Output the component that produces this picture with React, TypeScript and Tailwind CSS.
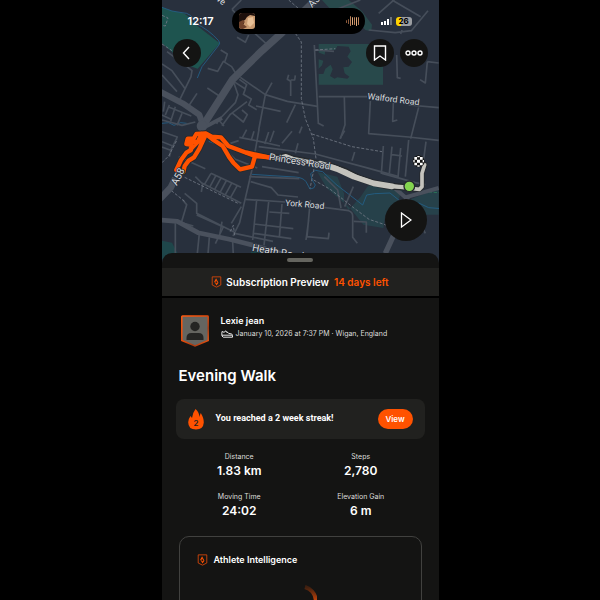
import React from 'react';

const minorRoads = [
  'M0 192l30 20 40 55M15 155l60 45 15 12-3 18-35 72M0 225l45 50',
  'M137 205l30 9 17-30 25 16 15 25M176 150l20 12-8 24',
  'M136 264l36 24M105 280l-25 38M225 112l25 15 10-22M273 95l42 38',
  'M210 28l18 20M210 28l28-28',
  'M235 232l75 52 66 20 90 15M330 248l-20 36-20 106',
  'M216 245l34 22-6 16 24 14-8 18 24 14M232 238l22 16-6 14',
  'M216 250l12 34-8 24-50 52-6 12M255 305l-50 38-25 34M212 340l32 26 12-22-16-14M170 360l16 18',
  'M282 318l74 16M400 314l-26 54M386 288l0-44-10-6 4-14M386 240l12 0 2-14',
  'M457 135l12 235 16 8M460 150l56 4M470 290l145 0M547 292l2 82-14 42M625 303l-5 98 120 10 90 10M770 322l-24 94M694 308l-2 56 14-4M740 315l90 8',
  'M704 165l2 68 10 2M796 185l-6 64-16-10M796 185l34 4',
  'M0 345l30 14M0 360l60 16 40-10M8 305l-4 30M22 315l-12 30M40 320l-14 44M60 340l-15 36M18 320l70 28',
  'M0 395l46 16-20 40-26-10M30 440l-8 30M0 425l34 14M50 470l80 36',
  'M291 388l-22 125-36 155-20 40M232 412l60 12 62 14M240 415l14-26M320 396l-12 36M336 392l-12 34M268 420l8-26M205 430l25-8',
  'M290 440l170 22 150 40 100 28M360 430l30-36M400 460l8-30M570 482l8-26M180 440l40 38 66 26M262 530l150 6M300 500l110 18',
  'M147 520l90 42M118 548l120 62M147 520l-20 34M162 526l-18 34M178 532l-20 36M194 540l-20 38M210 548l-20 36M226 556l-20 36M100 530l22 22-4 24',
  'M266 545l62 18 20 22 60 6M250 598l120 8M485 622l75 10q12 4 12 16l0 64 14 18M284 600l-12 120M320 606l-14 130M360 612l-8 100M276 672l118 14M276 700l112 16M322 636l60 4',
  'M68 580l36 30 0 30 112 56M62 600l12 14-16 54 36 10M218 700l115 24M104 645l80 36-24 50M238 620l-30 50',
  'M40 670l0 90M112 700l-6 60M142 712l-4 50M212 725l2 40M180 665l-6 36',
  'M487 530l40 40 10 54M445 600l-10 110 64 6 2-18M440 660l-8 60M575 664l38 2 0 32M499 716l2-16M548 620l26-60',
  'M690 440l-8 80M716 444l-8 88M664 438l-6 84M740 420l-10 110M792 425l-12 90M690 464l30 4M660 520l100 28 30 6M760 640l30 60',
  'M595 0l-70 28 40 12M620 90l80 8 48-6 50-60M690 0l86 50M650 40l48-42M720 90l-4 12M470 0l-10 14',
  'M420 380l-8 20M534 416l14-24',
];

const knownRoute = 'M326 472l24 2 22-6 20 8 60 12 60 12 38 14 40 20 40 13 40 10 52 4';

function StreetMap() {
  return (
    <svg
      viewBox="0 0 831 798"
      preserveAspectRatio="xMidYMin slice"
      className="absolute inset-0 h-full w-full"
      fill="none"
      strokeLinejoin="round"
      aria-label="Route map"
    >
      <path fill="#28303d" d="M-600 0h2000v900H-600z" />
      <path fill="#1e544f" d="M0 22q30 14 60 16 20 6 34 30l79 62-66 76-30-10-77-66z" />
      <path fill="#28494b" d="M480 0h80l40 34 30 40-2 20-18-4-50-58-56-6zM470 132h193v122H470z" />
      <path
        fill="#28303d"
        d="M490 150l30 0 6-12 34 2 6 14-10 16 14 16-10 14-16 2 4 18 14 10-6 6-30-4-8 4-14-8 8-20-6-14-16 12-6 16-16 0-4-10 16-16 4-14-14-4-10-10 6-12 22 8z"
      />
      <path fill="#26414a" d="M466 516l60 14 20 50 0 30 14 20 36-40 20-30 20-14 40 12 48 8-20 44-34 34-6 40-60-10-40-50-70-60z" />
      <path fill="#26414a" d="M740 600l90-36v80l-90 0z" />
      <path fill="#1e464a" d="M0 722l30 6 16 30 0 20H0zM270 752l50 0 10 16h-70z" />
      <g stroke="#23628a" strokeWidth="2.500">
        <path d="M0 22q30 14 60 16 30 0 40 32 40 18 70 52 6 8 0 14l-50 64-14 34M0 370l20-2 16 8 20-8 18 2M140 424l60 22" />
        <path d="M270 523l60 4 70 4q24 2 32 14l12 22q14 0 16-12l-10-16-4-18 14-10 22 4 40 38 80 62 12-30 24-4 46-2 30 24 10 8 46-2 30 14 51 4" />
      </g>
      <path stroke="#2b7358" strokeWidth="3" strokeDasharray="10 5" d="M770 574l61 4" />
      <g stroke="#464e5a" strokeWidth="5">
        {minorRoads.map((d) => (
          <path key={d} d={d} />
        ))}
      </g>
      <g stroke="#727a85" strokeWidth="2.500" strokeDasharray="9 5">
        <path d="M0 46l18 8-8 24-10-2M0 132l30 20M400 100l18 26 0 170 12 60 24 60 8 60-18 90M450 402l120 38 90 15M68 532l164 80M28 572l40 32M0 488l20-20 26-50M218 706l-4-30-10 20M455 540l50 28 76 60 40 30 60 20M380 0l30 26M460 150l60-4" />
      </g>
      <g stroke="#4a515d">
        <path strokeWidth="22" d="M460 0l-100 98-60 54-88 86-50 78-45 70" />
        <path strokeWidth="18" d="M-4 276l66 34 50 34 14 40" />
        <path strokeWidth="20" d="M40 535l-14 28-40 42" />
        <path strokeWidth="14" d="M-4 660l50 4 62 34 94 20 80 20 100 30" />
        <path strokeWidth="16" d="M736 590l-20 70-46 100" />
        <path strokeWidth="12" d="M700 566l30 26 100-28M130 380l50-26" />
      </g>
      <circle cx="120" cy="378" r="16" fill="#4a515d" />
      <g strokeLinecap="round">
        <path stroke="#25292d" strokeWidth="21" d={knownRoute} />
        <path stroke="#25292d" strokeWidth="16" d="M696 559l76 9 8-8 0-40 8-26" />
        <path stroke="#c4c3bd" strokeWidth="12" d={knownRoute} />
        <path stroke="#c4c3bd" strokeWidth="17" d="M475 491l50 16 50 23 60 20 55 9" />
        <path stroke="#c4c3bd" strokeWidth="11" d="M696 559l76 9 8-8 0-40 8-26" />
        {[
          { color: '#25292d', width: 18 },
          { color: '#ff5200', width: 13 },
        ].map(({ color, width }) => (
          <g key={color} stroke={color} strokeWidth={width}>
            <path d="M43 510l14-30 16-22 14-8 0-16-14-2 4-16 18 0 8-14 28-2 18 10 28 2 22 26 80 30 44 4" />
            <path d="M64 516l4-18 12-16 16-10 16-26 20-44 20 16 30 20 20 34 12 16 20 20 36-8 8-28M255 458l65 14M87 446l20-20 12-24M76 424l24 2" />
          </g>
        ))}
      </g>
      <circle cx="742" cy="559" r="16" fill="#83d44f" stroke="#25292d" strokeWidth="4" />
      <circle cx="770" cy="484" r="18" fill="#151515" />
      <path
        fill="#fff"
        d="M765 479h9v9h-9zM757 471h8v8h-8zM774 471h8v8h-8zM757 488h8v8h-8zM774 488h8v8h-8zM766 468h7v4h-7zM766 496h7v4h-7zM754 480h4v7h-4zM782 480h4v7h-4z"
      />
      <g
        fill="#d9dbdd"
        stroke="#28303d"
        strokeWidth="5"
        paintOrder="stroke"
        fontFamily="Roboto, 'Liberation Sans', sans-serif"
        fontSize="26"
      >
        <text transform="translate(616 297) rotate(7)">Walford Road</text>
        <text transform="translate(320 480) rotate(9)" fontSize="29">Princess Road</text>
        <text transform="translate(369 617) rotate(5)">York Road</text>
        <text transform="translate(269 752) rotate(10)" fontSize="30">Heath Road</text>
        <text transform="translate(44 558) rotate(-62)" fontSize="30">A58</text>
        <text transform="translate(450 24) rotate(-45)" fontSize="30">A58</text>
        <text transform="translate(136 -18) rotate(36)">Drive</text>
      </g>
    </svg>
  );
}

function ShieldMark() {
  return (
    <svg viewBox="0 0 12 14" className="h-3 w-[11px]" fill="none" aria-hidden="true">
      <path d="M1 1h10v9.500L6 13 1 10.500z" stroke="#d9480b" strokeWidth="1" />
      <path d="M5.500 2.500L3 7.200h1.600l1-2 1 2H8zM6.700 7.500l-.9 1.200-.7-1.200H4L6 11l2.500-3.500z" fill="#ff5200" />
    </svg>
  );
}

function Avatar() {
  return (
    <svg viewBox="0 0 28 32" className="h-8 w-7 shrink-0" role="img" aria-label="Lexie jean">
      <defs>
        <linearGradient id="avatarRing" x1="0" y1="0" x2="1" y2="1">
          <stop offset="0" stopColor="#ff5a10" />
          <stop offset=".45" stopColor="#e84a08" />
          <stop offset=".7" stopColor="#a33a12" />
          <stop offset="1" stopColor="#ff5a10" />
        </linearGradient>
      </defs>
      <path
        d="M1.500 1h25q.7 0 .7.700v23.800L14 31 .8 25.500V1.700q0-.7.7-.7z"
        fill="#656560"
        stroke="url(#avatarRing)"
        strokeWidth="1.500"
      />
      <circle cx="14" cy="11.500" r="4.700" fill="#252523" />
      <path d="M5.500 25v-2q0-5 5-5h7q5 0 5 5v2z" fill="#252523" />
    </svg>
  );
}

function Shoe() {
  return (
    <svg viewBox="0 0 12 8" className="h-2 w-3 shrink-0" fill="none" stroke="#e8e8e8" strokeWidth="1" aria-hidden="true">
      <path d="M1 1.500l2 .8L5 .8l2.500 2.500 3 .7q1 .4 1 1.500v1.700H2.200Q.5 6.500.8 4zM1 5.200h10.300M5.500 3l1-1" />
    </svg>
  );
}

function Stat({ label, value }: { label: string; value: string }) {
  return (
    <div className="flex flex-col items-center">
      <dt className="text-[7px] leading-[12px] text-[#dededc]">{label}</dt>
      <dd className="text-[12px] leading-[16px] font-semibold">{value}</dd>
    </div>
  );
}

const roundButton = 'flex h-7 w-7 items-center justify-center rounded-full bg-[#141413]';
const bars = [
  'h-[3px] bg-[#8d5b3c]',
  'h-[5px] bg-[#8d5b3c]',
  'h-[10px] bg-[#ba8059]',
  'h-[8px] bg-[#dfaa7b]',
  'h-[8px] bg-[#ba8059]',
  'h-[9px] bg-[#dfaa7b]',
  'h-[8px] bg-[#ba8059]',
];

export default function App() {
  return (
    <div className="flex h-screen justify-center overflow-hidden bg-black font-['Inter','Liberation_Sans',sans-serif] text-white">
      <main className="flex w-full max-w-[277px] flex-col overflow-hidden bg-[#141413]">
        <section className="relative h-[266px] shrink-0">
          <StreetMap />
          <div className="relative flex flex-col px-[11px] pt-2">
            <div className="flex items-center justify-between pr-4 pl-[15px]">
              <time className="w-7 text-[11px] leading-[26px] font-semibold">12:17</time>
              <div className="flex h-[26px] w-[133px] items-center justify-between rounded-full bg-black pr-[6px] pl-[7px]">
                <svg viewBox="0 0 16 16" className="h-4 w-4 rounded-[3px]" aria-hidden="true">
                  <path fill="#c99a70" d="M0 0h16v16H0z" />
                  <path fill="#1d0f0b" d="M0 0h16v3l-5-1-3 2-2 3-2 1 1 3-4 2-1 1z" />
                  <path fill="#70432c" d="M0 9l4-2 2 2-2 2 4 3-4 2H0z" />
                  <path fill="#e8c096" d="M9 5l5-1 1 6-4 4-3-3z" />
                </svg>
                <div className="flex items-center gap-px">
                  {bars.map((bar, i) => (
                    <span key={i} className={'w-px rounded-full ' + bar} />
                  ))}
                </div>
              </div>
              <div className="flex items-center gap-1">
                <div className="flex items-end gap-px" aria-label="Signal strength">
                  <span className="h-[3px] w-[2px] bg-white" />
                  <span className="h-1 w-[2px] bg-white" />
                  <span className="h-[6px] w-[2px] bg-white" />
                  <span className="h-2 w-[2px] bg-[#69707a]" />
                </div>
                <span className="flex h-[9px] w-4 items-center justify-center rounded-[3px] bg-linear-to-r from-[#ffd400] from-30% to-[#9b9da1] to-30% text-[8px] font-bold text-black">
                  26
                </span>
              </div>
            </div>
            <div className="mt-[5px] flex items-center justify-between">
              <button className={roundButton} aria-label="Back">
                <svg viewBox="0 0 14 14" className="h-[14px] w-[14px]" fill="none" stroke="white" strokeWidth="1.400">
                  <path d="M9 1L3.500 7 9 13" />
                </svg>
              </button>
              <div className="flex gap-[6px]">
                <button className={roundButton} aria-label="Save">
                  <svg viewBox="0 0 14 16" className="h-4 w-[14px]" fill="none" stroke="white" strokeWidth="1.400">
                    <path d="M1.500 1h11v14L7 11l-5.500 4z" />
                  </svg>
                </button>
                <button className={roundButton} aria-label="More options">
                  <svg viewBox="0 0 18 6" className="h-[6px] w-[18px]" fill="none" stroke="white" strokeWidth="1.400">
                    <circle cx="3" cy="3" r="2" />
                    <circle cx="9" cy="3" r="2" />
                    <circle cx="15" cy="3" r="2" />
                  </svg>
                </button>
              </div>
            </div>
          </div>
          <button
            className="absolute right-3 bottom-[25px] flex h-[42px] w-[42px] items-center justify-center rounded-full bg-[#141413]"
            aria-label="Play route"
          >
            <svg viewBox="0 0 12 16" className="h-4 w-3" fill="none" stroke="white" strokeWidth="1.300">
              <path d="M1.500 1l9.500 7-9.500 7z" />
            </svg>
          </button>
        </section>

        <div className="relative -mt-[13px] flex h-[15px] shrink-0 justify-center rounded-t-[10px] bg-[#141413] pt-[5px]">
          <span className="h-1 w-[26px] rounded-full bg-[#65655f]" />
        </div>
        <div className="flex h-7 shrink-0 items-center justify-center bg-[#21211f] text-[10px] font-semibold">
          <ShieldMark />
          <span className="ml-1">Subscription Preview</span>
          <span className="ml-[5px] text-[#ff5200]">14 days left</span>
        </div>
        <div className="h-[2px] shrink-0 bg-black" />

        <section className="flex flex-col px-[14px] pt-[17px]">
          <header className="flex gap-3 pl-[5px]">
            <Avatar />
            <div className="-mt-px">
              <p className="text-[9px] leading-[13px] font-semibold">Lexie jean</p>
              <p className="flex items-center gap-[3px] text-[7px] leading-[13px] whitespace-nowrap text-[#dededc]">
                <Shoe />
                January 10, 2026 at 7:37 PM · Wigan, England
              </p>
            </div>
          </header>
          <h1 className="mt-[19px] pl-[3px] text-[15px] leading-5 font-semibold">Evening Walk</h1>

          <div className="mt-[13px] flex h-10 items-center rounded-lg bg-[#21211f] pr-3 pl-3">
            <svg viewBox="0 0 16 21" className="h-[21px] w-4 shrink-0" role="img" aria-label="2 week streak">
              <path
                fill="#ff5200"
                d="M7.500 0q4 3.300 3.700 8l1.600-4q3.200 5.500 3 9.500-.5 7-7.800 7Q.2 20.500.2 13.200q0-3 2.300-6.200L4 9Q4.500 4 7.500 0z"
              />
              <text x="8" y="17" textAnchor="middle" fill="#21211f" className="text-[8px] font-semibold">2</text>
            </svg>
            <p className="ml-3 flex-1 font-['Roboto','Liberation_Sans',sans-serif] text-[9px] font-bold">
              You reached a 2 week streak!
            </p>
            <button className="h-5 w-[35px] rounded-full bg-[#ff5200] text-[8px] font-semibold">View</button>
          </div>

          <dl className="mt-3 grid grid-cols-2 gap-y-3 px-[3px]">
            <Stat label="Distance" value="1.83 km" />
            <Stat label="Steps" value="2,780" />
            <Stat label="Moving Time" value="24:02" />
            <Stat label="Elevation Gain" value="6 m" />
          </dl>

          <article className="mx-[3px] mt-[17px] h-[100px] rounded-[10px] border border-[#41413f] px-[17px] pt-4">
            <h2 className="flex items-center gap-[6px] text-[9px] leading-[14px] font-semibold">
              <ShieldMark />
              Athlete Intelligence
            </h2>
            <svg viewBox="0 0 34 34" className="mx-auto mt-[17px] h-[34px] w-[34px]" fill="none" aria-label="Loading">
              <defs>
                <linearGradient id="spin" x1="0" y1="0" x2="0" y2="1">
                  <stop offset="0" stopColor="#a43a08" stopOpacity=".3" />
                  <stop offset=".5" stopColor="#c4440a" />
                </linearGradient>
              </defs>
              <path d="M22 3a15 15 0 0 1 4 27" stroke="url(#spin)" strokeWidth="4" />
            </svg>
          </article>
        </section>
      </main>
    </div>
  );
}
